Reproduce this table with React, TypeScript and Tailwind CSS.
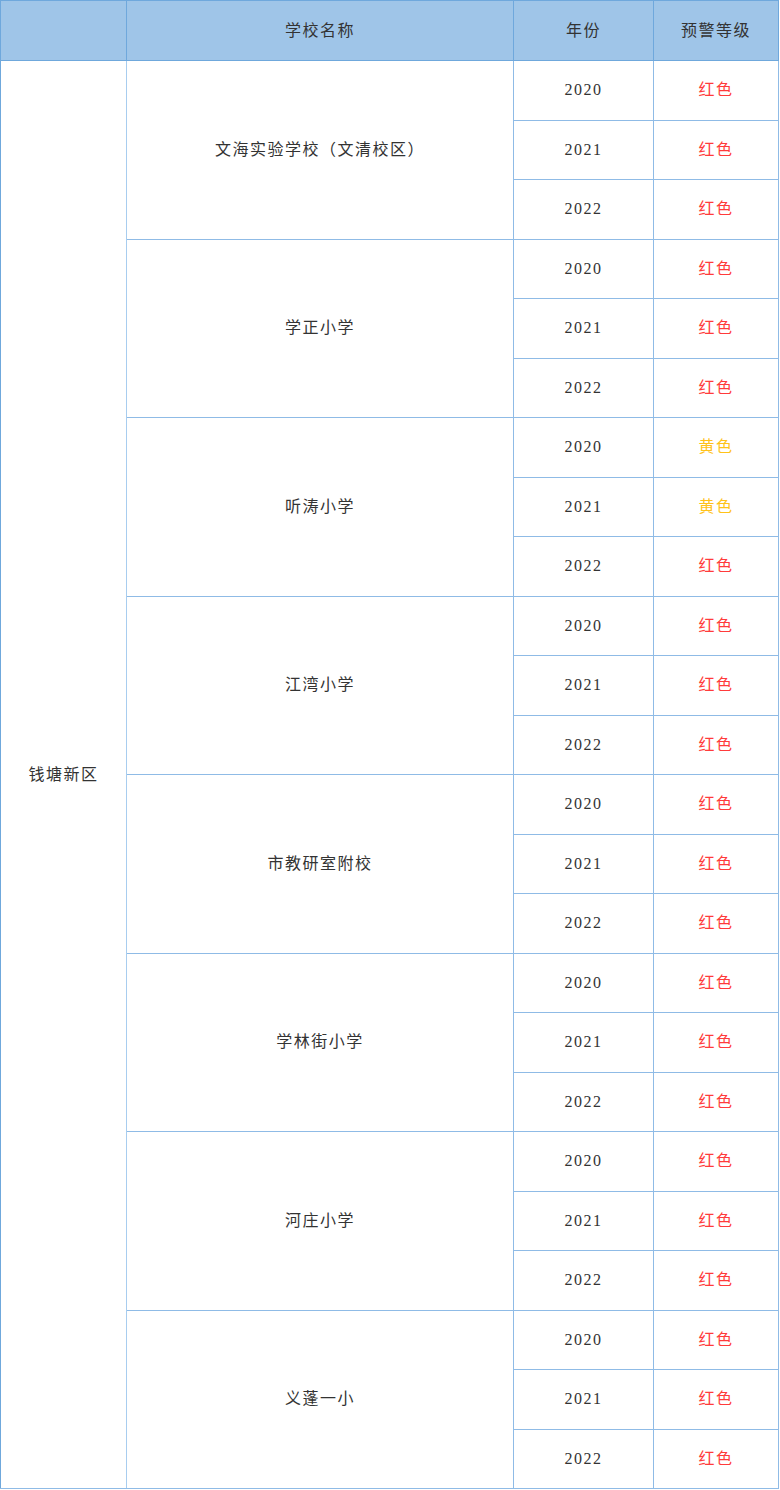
const SCHOOLS: { name: string; levels: ("red" | "yellow")[] }[] = [
  { name: "文海实验学校（文清校区）", levels: ["red", "red", "red"] },
  { name: "学正小学", levels: ["red", "red", "red"] },
  { name: "听涛小学", levels: ["yellow", "yellow", "red"] },
  { name: "江湾小学", levels: ["red", "red", "red"] },
  { name: "市教研室附校", levels: ["red", "red", "red"] },
  { name: "学林街小学", levels: ["red", "red", "red"] },
  { name: "河庄小学", levels: ["red", "red", "red"] },
  { name: "义蓬一小", levels: ["red", "red", "red"] },
];

const YEARS = ["2020", "2021", "2022"];

const LEVEL_LABEL = { red: "红色", yellow: "黄色" };
const LEVEL_CLASS = { red: "text-[#ff3b3b]", yellow: "text-[#ffc21a]" };

const cell = "border border-[#8fbbe6] text-center align-middle";

export default function App() {
  const total = SCHOOLS.length * YEARS.length;
  return (
    <div
      className="w-[780px] bg-white text-[16px] tracking-[1.5px] text-[#333]"
      style={{ fontFamily: '"Liberation Serif", "Noto Sans CJK SC", serif' }}
    >
      <table className="w-[779px] table-fixed border-collapse border border-[#6fa8dc]">
        <colgroup>
          <col className="w-[126px]" />
          <col className="w-[387px]" />
          <col className="w-[140px]" />
          <col />
        </colgroup>
        <thead>
          <tr className="h-[60px] bg-[#9fc5e8]">
            <th className="border border-[#6fa8dc] font-normal" />
            <th className="border border-[#6fa8dc] font-normal">学校名称</th>
            <th className="border border-[#6fa8dc] font-normal">年份</th>
            <th className="border border-[#6fa8dc] font-normal">预警等级</th>
          </tr>
        </thead>
        <tbody>
          {SCHOOLS.map((school, si) =>
            YEARS.map((year, yi) => (
              <tr key={`${si}-${yi}`} className="h-[59.5px]">
                {si === 0 && yi === 0 ? (
                  <td rowSpan={total} className={`${cell} border-l-[#6fa8dc] border-r-[#a8cdef]`}>
                    钱塘新区
                  </td>
                ) : null}
                {yi === 0 ? (
                  <td rowSpan={3} className={`${cell} border-l-[#a8cdef]`}>
                    {school.name}
                  </td>
                ) : null}
                <td className={cell}>{year}</td>
                <td className={`${cell} ${LEVEL_CLASS[school.levels[yi]]}`}>
                  {LEVEL_LABEL[school.levels[yi]]}
                </td>
              </tr>
            )),
          )}
        </tbody>
      </table>
    </div>
  );
}
